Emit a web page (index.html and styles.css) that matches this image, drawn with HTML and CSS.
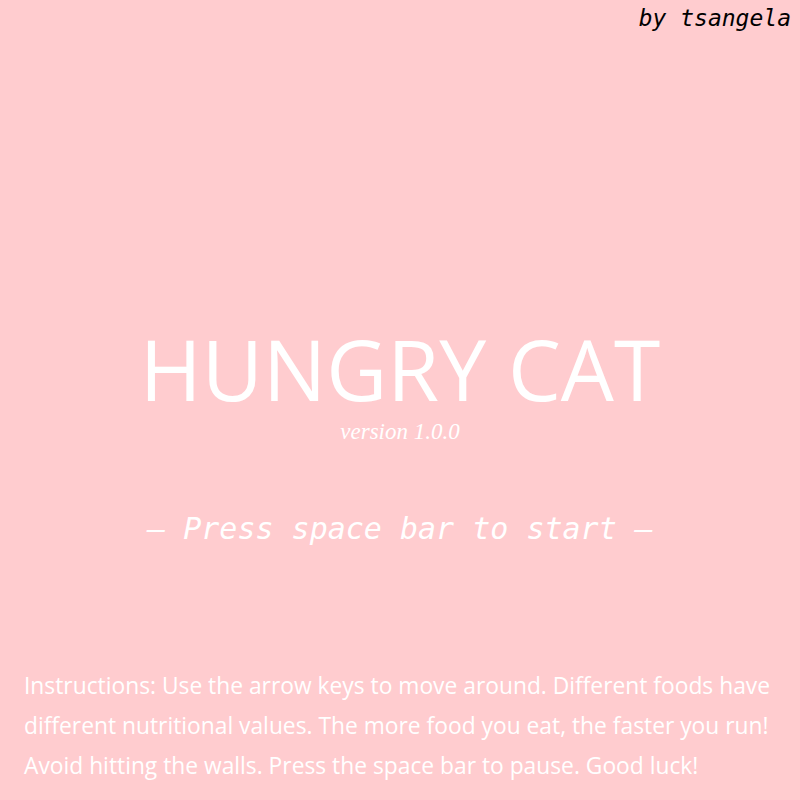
FILE: index.html
```html
<!DOCTYPE html>
<html>
<head>
<meta charset="utf-8">
<link rel="stylesheet" href="styles.css">
</head>
<body>
<div class="screen">
  <div class="credit">by tsangela</div>
  <div class="center">
    <h1 class="title">HUNGRY CAT</h1>
    <div class="version">version 1.0.0</div>
    <div class="start">– Press space bar to start –</div>
  </div>
  <p class="instructions">Instructions: Use the arrow keys to move around. Different foods have<br>different nutritional values. The more food you eat, the faster you run!<br>Avoid hitting the walls. Press the space bar to pause. Good luck!</p>
</div>
</body>
</html>
```

FILE: styles.css
```css
html, body {
  margin: 0;
  padding: 0;
}
body {
  background: #ffcccf;
  -webkit-font-smoothing: none;
}
.screen {
  width: 800px;
  height: 800px;
  display: flex;
  flex-direction: column;
  color: #ffffff;
}
.credit {
  font-family: "DejaVu Sans Mono", monospace;
  font-style: italic;
  font-size: 23px;
  line-height: 32px;
  color: #000000;
  text-align: right;
  padding: 2px 9px 0 0;
}
.center {
  flex: 1;
  display: flex;
  flex-direction: column;
  align-items: center;
}
.title {
  margin: 300px 0 0;
  font-family: "Open Sans", sans-serif;
  font-weight: normal;
  font-size: 84px;
  line-height: 70px;
}
.version {
  font-family: "Liberation Serif", serif;
  font-style: italic;
  font-size: 23px;
  line-height: 26px;
  margin-top: 15px;
}
.start {
  font-family: "DejaVu Sans Mono", monospace;
  font-style: italic;
  font-size: 30px;
  line-height: 40px;
  margin-top: 64px;
}
.instructions {
  margin: 0 0 14px 24px;
  font-family: "Open Sans", sans-serif;
  font-size: 22.8px;
  line-height: 40px;
}
```
